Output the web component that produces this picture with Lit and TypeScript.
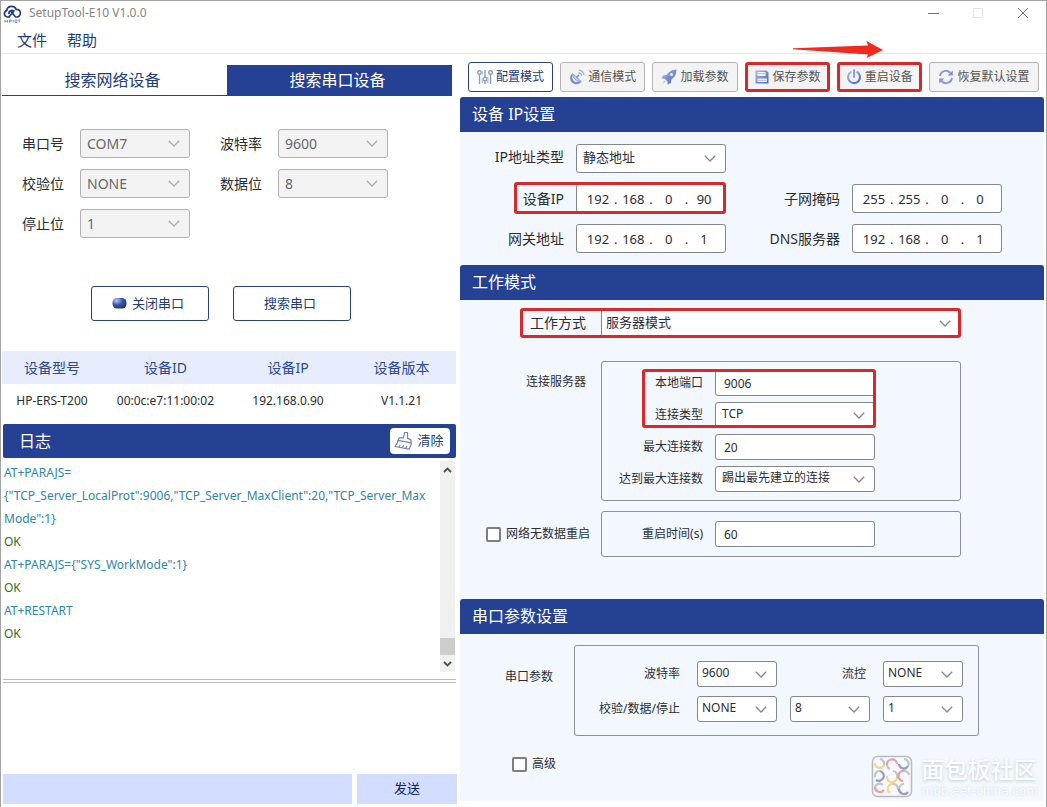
import { LitElement, html, css, svg } from "lit";
import { customElement, state } from "lit/decorators.js";
import { classMap } from "lit/directives/class-map.js";

const chevron = html`<svg class="chev" viewBox="0 0 12 7" aria-hidden="true">
  <path d="M0.8 0.8 L6 6 L11.2 0.8" fill="none" stroke="currentColor" stroke-width="1.3" />
</svg>`;

const toolIcons = {
  config: svg`<g fill="none" stroke="#8c9cc6" stroke-width="1.4">
      <path d="M2.5 5.6V15M8 1V8.4M8 12V15M13.5 5.6V15" />
      <circle cx="2.5" cy="3.6" r="1.8" /><circle cx="8" cy="10.2" r="1.8" /><circle cx="13.5" cy="3.6" r="1.8" />
      <path d="M5.3 2v3.5M10.8 8v6M5.3 9v5" stroke="#b9c6ea" />
    </g>`,
  comm: svg`<path d="M2.600 5A5.600 5.600 0 1 0 12 13.200L9.500 12.500A4.500 4.500 0 0 1 3.500 7z" fill="#7d8fc6" />
    <path d="M3.600 4.600C3 8 7.500 13 12.300 12.600z" fill="#c6d1f2" stroke="#8b9ccd" stroke-width="1" />
    <path d="M7.500 8.500L9.800 6" stroke="#7d8fc6" stroke-width="1.600" />
    <path d="M9.500 3.800a3 3 0 0 1 3 3M10 1.200a5.200 5.200 0 0 1 5 5" fill="none" stroke="#a3b5f0" stroke-width="1.500" />`,
  rocket: svg`<path d="M15.500 .5C10.500 .6 7.500 3 5.500 6L2 6.500.5 9.500l3.200.2 2.800 2.800.3 3 3-1.500.6-3.500C13.500 8.500 15.400 5.500 15.500.5z" fill="url(#blueFade)" />
    <circle cx="10.600" cy="5.400" r="1.500" fill="#e8edfb" /><path d="M3.800 11.400L1 15l3.700-2.500z" fill="#9fb0e4" />`,
  save: svg`<path d="M1.500 1.500h11l2 2v11h-13z" fill="url(#blueFade)" />
    <path d="M3.500 3h8v4h-8zM3.500 9.500h9.500v3.500H3.500z" fill="#f4f6fd" />
    <path d="M3.500 4.600h8M3.500 11.300h9.500" stroke="#a6b6e6" stroke-width=".9" />`,
  power: svg`<path d="M4.600 3.200A6 6 0 1 0 11.400 3.200" fill="none" stroke="url(#blueFade)" stroke-width="2.200" stroke-linecap="round" />
    <path d="M8 1V8" stroke="#8aa0e6" stroke-width="2" stroke-linecap="round" />`,
  reset: svg`<path d="M2 7A6 6 0 0 1 12.500 4M14 9A6 6 0 0 1 3.500 12" fill="none" stroke="#8a9bd0" stroke-width="2" />
    <path d="M14.800 1.500V6.600H9.800zM1.200 14.500V9.400H6.200z" fill="#7f95d8" />`,
};

interface Tool { label: string; icon: keyof typeof toolIcons; kind?: string }

@customElement("app-root")
export class AppRoot extends LitElement {
  @state() tab = 1;
  @state() tools: Tool[] = [
    { label: "配置模式", icon: "config", kind: "active" },
    { label: "通信模式", icon: "comm" },
    { label: "加载参数", icon: "rocket" },
    { label: "保存参数", icon: "save", kind: "marked" },
    { label: "重启设备", icon: "power", kind: "marked" },
    { label: "恢复默认设置", icon: "reset", kind: "wide" },
  ];

  static styles = css`
    :host {
      --navy: #254193;
      --ink: #2b2d33;
      --line: #83868c;
      --red: #d8282c;
      display: flex;
      flex-direction: column;
      min-height: 100vh;
      box-sizing: border-box;
      position: relative;
      border: 1px solid #a3a3a3;
      border-bottom: 0;
      background: #fff;
      color: var(--ink);
      font: 12px/20px "Noto Sans", "Noto Sans CJK SC", sans-serif;
    }
    *, *::before, *::after { box-sizing: border-box; }
    button, input, select, textarea { font: inherit; color: inherit; margin: 0; }
    button { cursor: pointer; padding: 0; }
    .defs { position: absolute; width: 0; height: 0; }

    .title { display: flex; align-items: center; height: 24px; padding: 0 16px 0 2px; color: #858585; font-size: 12px; }
    .title .logo { width: 18px; height: 20px; margin-right: 8px; }
    .title .name { flex: 1; font-weight: normal; }
    .title .win { border: 0; background: none; width: 14px; height: 14px; margin-left: 31px; color: #777; }
    .title .win.off { color: #e2e2e2; }
    .title .win svg { display: block; width: 14px; height: 14px; }
    .menu { display: flex; gap: 20px; padding: 2px 16px 0; height: 29px; border-bottom: 1px solid #e3e8ea; }
    .menu button { border: 0; background: none; font-size: 15px; color: #223c78; height: 26px; }

    main { flex: 1; display: grid; grid-template-columns: minmax(0, 455fr) minmax(0, 584fr); gap: 3px; padding: 0 2px 0 1px; }
    .left { display: flex; flex-direction: column; padding: 11px 0 3px; }
    .tabs { display: grid; grid-template-columns: 1fr 1fr; margin-right: 5px; border-bottom: 1px solid #2b4478; }
    .tabs button { height: 30px; border: 0; background: #fff; color: #223c78; font-size: 16px; padding-right: 4px; }
    .tabs button.on { background: var(--navy); color: #fff; }

    .port { display: grid; grid-template-columns: 42px 110px 42px 110px; column-gap: 16px; row-gap: 11px; align-items: center; padding: 33px 20px 0; font-size: 14px; }
    .port label:nth-of-type(2n) { margin: 0 -14px 0 14px; }
    .port .select:nth-of-type(2n) { margin: 0 -14px 0 14px; }

    .select { display: grid; align-items: center; color: var(--ink); min-width: 0; }
    .select > * { grid-area: 1 / 1; }
    .select select { appearance: none; width: 100%; height: 29px; border: 1px solid var(--line); border-radius: 3px; background: #fff; padding: 0 24px 3px 6px; outline: none; opacity: 1; }
    .select select:disabled { background: #f3f3f3; border-color: #b1b1b1; color: #686868; padding-bottom: 0; }
    .select .chev { justify-self: end; width: 12px; height: 7px; margin-right: 10px; color: #85888e; pointer-events: none; }
    .select select:disabled + .chev { color: #a9abaf; }
    .select.low select { height: 26px; padding-bottom: 2px; }

    .actions { display: flex; gap: 24px; padding: 48px 0 30px 89px; }
    .actions button { width: 118px; height: 35px; border: 1px solid #2b4478; border-radius: 3px; background: #fff; color: #223c78; font-size: 13px; display: flex; align-items: center; justify-content: center; gap: 5px; padding: 0 4px 2px 0; }
    .actions svg { width: 15px; height: 12px; }

    table { border-collapse: collapse; table-layout: fixed; width: calc(100% - 1px); text-align: center; }
    th { height: 33px; padding: 0; background: #e8edfd; color: #2b4a98; font-weight: normal; font-size: 14px; }
    td { height: 33px; padding: 0; }
    .c1 { width: 22%; } .c2 { width: 28%; } .c3 { width: 26%; } .c4 { width: 24%; }

    .loghead { display: flex; align-items: center; justify-content: space-between; margin: 7px 1px 0 1px; height: 34px; padding: 0 6px 0 16px; background: var(--navy); color: #fff; border-radius: 2px; }
    h2 { margin: 0; font-size: 16px; font-weight: normal; }
    .loghead button { display: flex; align-items: center; justify-content: center; gap: 4px; width: 60px; height: 26px; border: 0; border-radius: 4px; background: #fff; color: #223c78; font-size: 13px; padding: 0 2px 2px 0; }
    .loghead svg { width: 19px; height: 19px; }
    .log { display: flex; height: 211px; margin-top: 3px; padding-right: 2px; }
    .lines { flex: 1; min-width: 0; padding-left: 2px; line-height: 23px; color: #2e86a8; font-size: 12px; overflow: hidden; }
    .lines p { margin: 0; white-space: nowrap; }
    .lines .ok { color: #346f28; }
    .bar { width: 15px; background: #f0f0f0; display: flex; flex-direction: column; justify-content: space-between; }
    .bar svg { display: block; width: 15px; height: 17px; color: #505050; }
    .bar .thumb { background: #cdcdcd; height: 17px; margin-top: auto; }
    .split { height: 4px; margin: 7px 1px 0; border: solid #bcbcbc; border-width: 1px 0; }
    textarea { flex: 1; min-height: 60px; border: 0; resize: none; background: #fff; outline: none; }
    .send { display: grid; grid-template-columns: 1fr 100px; gap: 5px; padding-left: 1px; }
    .send input, .send button { height: 30px; border: 0; border-radius: 0; background: #d3ddff; color: #14205a; font-size: 13px; padding-bottom: 2px; }

    .right { position: relative; display: flex; flex-direction: column; padding-bottom: 6px; }
    .tools { display: flex; gap: 7px; padding: 8px 5px 5px 8px; }
    .tools button { display: flex; align-items: center; justify-content: center; gap: 3px; flex: 1 1 85px; height: 30px; border: 1px solid #b3b3b3; border-radius: 3px; background: #f3f3f3; color: #555; white-space: nowrap; }
    .tools button.wide { flex-basis: 110px; }
    .tools button.active { background: #fff; border-color: #2b4478; color: #223c78; }
    .tools button.marked { border: 3px solid var(--red); }
    .tools svg { width: 16px; height: 16px; flex: none; }
    .arrow { position: absolute; left: 333px; top: -14px; width: 90px; height: 20px; }

    section { background: #f3f8fe; }
    section h2 { height: 35px; line-height: 35px; padding-left: 12px; background: var(--navy); color: #fff; border-radius: 3px 3px 0 0; }
    .mark { border: 3px solid var(--red); border-radius: 3px; z-index: 1; pointer-events: none; align-self: stretch; }

    .net { display: grid; grid-template-columns: 104px minmax(0, 150px) 102px minmax(0, 150px); column-gap: 12px; row-gap: 11px; align-items: center; padding: 12px 0; font-size: 14px; }
    .net > label, .net > .lab { text-align: right; }
    .net > label { padding-bottom: 4px; }
    .net .wide { grid-column: 2 / 5; width: 150px; }
    .net select { font-size: 13px; }
    .net .mark { grid-area: 2 / 1 / 3 / 3; margin: -2px 0 -1px 54px; }
    .net .k2 { grid-area: 2 / 1; } .net .v2 { grid-area: 2 / 2; }
    .ip { display: flex; align-items: center; height: 29px; border: 1px solid var(--line); border-radius: 3px; background: #fff; padding: 0 5px; font-size: 13px; }
    .ip input { flex: 1; min-width: 0; width: 0; border: 0; padding: 0; background: none; text-align: center; outline: none; }

    .work { display: grid; grid-template-columns: 126px minmax(0, 360px); column-gap: 15px; row-gap: 10px; padding: 9px 0 42px; }
    .work .mode { grid-area: 1 / 2; margin: 0 0 14px; font-size: 13px; }
    .work .mode select { height: 28px; padding-left: 4px; }
    .work .modeLab { grid-area: 1 / 1; text-align: right; font-size: 14px; line-height: 28px; }
    .work .mark { grid-area: 1 / 1 / 2 / 3; margin: -1px 0 13px 60px; }
    .side { text-align: right; padding-top: 11px; }
    fieldset { margin: 0; border: 1px solid #8a8f99; border-radius: 3px; padding: 8px 0; min-width: 0; }
    .group { display: grid; grid-template-columns: 101px minmax(0, 160px); column-gap: 12px; row-gap: 6px; align-items: center; }
    .group.single { padding: 9px 0; }
    .group > label { text-align: right; white-space: nowrap; }
    .group input { width: 100%; height: 26px; border: 1px solid var(--line); border-radius: 3px; background: #fff; padding: 0 8px; outline: none; }
    .group .mark { grid-area: 1 / 1 / 3 / 3; margin: -1px -1px 0 40px; }
    .group .k1 { grid-area: 1 / 1; } .group .v1 { grid-area: 1 / 2; } .group .k3 { grid-area: 2 / 1; } .group .v3 { grid-area: 2 / 2; }
    .check { display: flex; align-items: center; gap: 5px; }
    .check input { appearance: none; flex: none; width: 15px; height: 15px; border: 2px solid #7c7f86; border-radius: 2px; background: #fff; }
    .check input:checked { background: var(--navy); }
    .work .check { padding-left: 26px; white-space: nowrap; }

    .serial { flex: 1; }
    .serial .row { display: grid; grid-template-columns: 93px minmax(0, 405px); column-gap: 21px; padding-top: 11px; }
    .serial .side { padding-top: 22px; }
    .serial .group { grid-template-columns: 109px repeat(3, minmax(0, 80px)); column-gap: 13px; row-gap: 9px; padding: 15px 0 13px; }
    .serial .group > label { padding-right: 4px; }
    .serial .check { padding: 18px 0 0 52px; width: max-content; }
    .serial .select select { padding: 0 20px 2px 4px; }

    .mark-site { position: absolute; right: 8px; bottom: 8px; display: flex; gap: 8px; align-items: center; color: #fff; opacity: .8; }
    .mark-site svg { width: 43px; height: 44px; }
    .mark-site b { display: block; font-size: 23px; line-height: 30px; font-weight: 500; text-shadow: 0 1px 3px #b4bccb; }
    .mark-site span { display: block; font: 12px/15px "DejaVu Sans", sans-serif; text-shadow: 0 0 2px #bcc4d2; }
  `;

  private pick(id: string, options: string[], cls = "", disabled = false, label = "") {
    return html`<span class="select ${cls}">
      <select id=${id} ?disabled=${disabled} aria-label=${label || id}>${options.map((o) => html`<option>${o}</option>`)}</select>
      ${chevron}
    </span>`;
  }

  private ip(label: string, value: string, cls = "") {
    const parts = value.split(".");
    return html`<div class="ip ${cls}" role="group" aria-label=${label}>
      ${parts.map((p, i) => html`${i ? html`<span>.</span>` : ""}<input .value=${p} maxlength="3" aria-label="${label} ${i + 1}" />`)}
    </div>`;
  }

  render() {
    return html`
      <svg class="defs" aria-hidden="true">
        <defs>
          <linearGradient id="blueFade" x1="0" y1="0" x2="1" y2="1"><stop offset="0" stop-color="#a8baf2" /><stop offset="1" stop-color="#4c66b4" /></linearGradient>
          <radialGradient id="led" cx=".3" cy=".25" r=".9"><stop offset="0" stop-color="#b9c8ee" /><stop offset=".45" stop-color="#3d57ab" /><stop offset="1" stop-color="#182c72" /></radialGradient>
        </defs>
      </svg>
      <header>
        <div class="title">
          <svg class="logo" viewBox="0 0 18 20" aria-hidden="true">
            <g fill="none" stroke="#223a8c" stroke-width="1.700" stroke-linecap="round">
              <path d="M6 14H4.300A3.300 3.300 0 0 1 3.700 7.600A5 5 0 0 1 13.200 6.300A3.800 3.800 0 0 1 13.800 14H12.600L8 8.500" />
              <path d="M6.200 13.500L11 8M6 10.500A2.500 2.500 0 0 1 10.500 8.600" />
            </g>
            <path d="M2 17v2.500M4.500 17v2.500M2 18.200h2.500M6.500 19.500V17h1.800v1.300H6.500M10.300 17v2.500M12 17h2v2.500h-2zM15 17h2.500M16.200 17v2.500" stroke="#5b6ba5" stroke-width=".7" fill="none" />
          </svg>
          <span class="name">SetupTool-E10 V1.0.0</span>
          <button class="win" aria-label="最小化"><svg viewBox="0 0 14 14"><path d="M2 7.500h11" stroke="currentColor" /></svg></button>
          <button class="win off" aria-label="最大化"><svg viewBox="0 0 14 14"><path d="M2.500 2.500h9v9h-9z" fill="none" stroke="currentColor" /></svg></button>
          <button class="win" aria-label="关闭"><svg viewBox="0 0 14 14"><path d="M2 2l10 10M12 2L2 12" stroke="currentColor" /></svg></button>
        </div>
        <nav class="menu"><button>文件</button><button>帮助</button></nav>
      </header>
      <main>
        <div class="left">
          <div class="tabs" role="tablist">
            ${["搜索网络设备", "搜索串口设备"].map((t, i) => html`<button role="tab" aria-selected=${this.tab === i} class=${classMap({ on: this.tab === i })} @click=${() => (this.tab = i)}>${t}</button>`)}
          </div>
          <div class="port">
            <label for="com">串口号</label>${this.pick("com", ["COM7"], "", true, "串口号")}
            <label for="baud">波特率</label>${this.pick("baud", ["9600"], "", true, "波特率")}
            <label for="parity">校验位</label>${this.pick("parity", ["NONE"], "", true, "校验位")}
            <label for="bits">数据位</label>${this.pick("bits", ["8"], "", true, "数据位")}
            <label for="stop">停止位</label>${this.pick("stop", ["1"], "", true, "停止位")}
          </div>
          <div class="actions">
            <button>
              <svg viewBox="0 0 15 12" aria-hidden="true"><rect x=".5" y="1" width="14" height="10.500" rx="4.500" fill="url(#led)" /></svg>关闭串口</button>
            <button>搜索串口</button>
          </div>
          <table>
            <thead><tr><th class="c1">设备型号</th><th class="c2">设备ID</th><th class="c3">设备IP</th><th class="c4">设备版本</th></tr></thead>
            <tbody><tr><td>HP-ERS-T200</td><td>00:0c:e7:11:00:02</td><td>192.168.0.90</td><td>V1.1.21</td></tr></tbody>
          </table>
          <div class="loghead">
            <h2>日志</h2>
            <button>
              <svg viewBox="0 0 19 19" aria-hidden="true">
                <g fill="none" stroke="#7384b4" stroke-width="1.200" stroke-linejoin="round">
                  <path d="M9.600 6.800L10.500 1.500h3L13.600 7.400 16.600 8.600l.7 3.200L4 9.400l1.200-2.600z" /><path d="M4 9.400C3.800 12.500 2.800 14 1 15.500L15 18.200c1.500-2 2.200-4 2.300-6.400M5 16l1.300-2.200M8.500 16.800L9.600 14M12 17.400l.8-2.600" />
                </g>
              </svg>清除</button>
          </div>
          <div class="log">
            <div class="lines">
              <p>AT+PARAJS=</p>
              <p>{"TCP_Server_LocalProt":9006,"TCP_Server_MaxClient":20,"TCP_Server_Max</p>
              <p>Mode":1}</p>
              <p class="ok">OK</p>
              <p>AT+PARAJS={"SYS_WorkMode":1}</p>
              <p class="ok">OK</p>
              <p>AT+RESTART</p>
              <p class="ok">OK</p>
            </div>
            <div class="bar" aria-hidden="true">
              <svg viewBox="0 0 15 17"><path d="M4 11L7.500 7.500 11 11" fill="none" stroke="currentColor" stroke-width="1.800" /></svg>
              <div class="thumb"></div>
              <svg viewBox="0 0 15 17"><path d="M4 7L7.500 10.500 11 7" fill="none" stroke="currentColor" stroke-width="1.800" /></svg>
            </div>
          </div>
          <div class="split"></div>
          <textarea aria-label="发送内容"></textarea>
          <div class="send"><input aria-label="发送" /><button>发送</button></div>
        </div>

        <div class="right">
          <div class="tools">
            ${this.tools.map((t) => html`<button class=${t.kind ?? ""}><svg viewBox="0 0 16 16" aria-hidden="true">${toolIcons[t.icon]}</svg>${t.label}</button>`)}
          </div>
          <svg class="arrow" viewBox="0 0 90 20" aria-hidden="true"><path d="M0 8.300L75 5.500 73.500 1 90 10 73.500 18 75 14.500 0 9.300z" fill="#f02a1c" /></svg>

          <section>
            <h2>设备 IP设置</h2>
            <div class="net">
              <label for="iptype">IP地址类型</label>${this.pick("iptype", ["静态地址"], "wide", false, "IP地址类型")}
              <span class="lab k2">设备IP</span>${this.ip("设备IP", "192.168.0.90", "v2")}
              <span class="lab">子网掩码</span>${this.ip("子网掩码", "255.255.0.0")}
              <span class="mark"></span>
              <span class="lab">网关地址</span>${this.ip("网关地址", "192.168.0.1")}
              <span class="lab">DNS服务器</span>${this.ip("DNS服务器", "192.168.0.1")}
            </div>
          </section>

          <section>
            <h2>工作模式</h2>
            <div class="work">
              <label class="modeLab" for="mode">工作方式</label>${this.pick("mode", ["服务器模式"], "mode", false, "工作方式")}
              <span class="mark"></span>
              <span class="side">连接服务器</span>
              <fieldset class="group" aria-label="连接服务器">
                <label class="k1" for="lport">本地端口</label><input class="v1" id="lport" value="9006" />
                <label class="k3" for="ctype">连接类型</label>${this.pick("ctype", ["TCP"], "low v3", false, "连接类型")}
                <span class="mark"></span>
                <label for="max">最大连接数</label><input id="max" value="20" />
                <label for="over">达到最大连接数</label>${this.pick("over", ["踢出最先建立的连接"], "low", false, "达到最大连接数")}
              </fieldset>
              <label class="check"><input type="checkbox" />网络无数据重启</label>
              <fieldset class="group single" aria-label="网络无数据重启">
                <label for="rt">重启时间(s)</label><input id="rt" value="60" />
              </fieldset>
            </div>
          </section>

          <section class="serial">
            <h2>串口参数设置</h2>
            <div class="row">
              <span class="side">串口参数</span>
              <fieldset class="group" aria-label="串口参数">
                <label for="sbaud">波特率</label>${this.pick("sbaud", ["9600"], "low", false, "波特率")}
                <label for="flow">流控</label>${this.pick("flow", ["NONE"], "low", false, "流控")}
                <label for="spar">校验/数据/停止</label>${this.pick("spar", ["NONE"], "low", false, "校验")}
                ${this.pick("sbits", ["8"], "low", false, "数据")}${this.pick("sstop", ["1"], "low", false, "停止")}
              </fieldset>
            </div>
            <label class="check"><input type="checkbox" />高级</label>
          </section>
        </div>
      </main>
      <div class="mark-site">
        <svg viewBox="0 0 43 44" aria-hidden="true">
          <rect x="1.500" y="1.500" width="39" height="40" rx="5" fill="#f8fafd" stroke="#a9acb6" stroke-width="1.500" />
          <g fill="none" stroke-width="2.200">
            <path d="M4 8a4.700 4.700 0 0 0 9 2" stroke="#f3cf72" /><path d="M9 4a4.700 4.700 0 0 1 4 6" stroke="#b3b6be" />
            <path d="M16 10a5 5 0 0 1 10 -1" stroke="#ee868c" /><path d="M16 10a5 5 0 0 0 3 4" stroke="#b3b6be" />
            <path d="M28 9a4.800 4.800 0 0 0 9 2" stroke="#8385b8" /><path d="M33 4a4.800 4.800 0 0 1 4 7" stroke="#b3b6be" />
            <path d="M9 16a5 5 0 1 1 -4 9" stroke="#8385b8" /><path d="M4 22a5 5 0 0 1 5 -6" stroke="#b3b6be" />
            <path d="M16 21a5 5 0 0 0 10 2" stroke="#f3cf72" /><path d="M22 16a5 5 0 0 1 4 7" stroke="#b3b6be" />
            <path d="M33 16a5 5 0 0 0 -1 10" stroke="#ee868c" /><path d="M33 16a5 5 0 0 1 5 4" stroke="#b3b6be" />
            <path d="M4 32a5 5 0 0 0 9 3" stroke="#ee868c" /><path d="M4 32a5 5 0 0 1 8 -2" stroke="#b3b6be" />
            <path d="M19 38a5 5 0 0 1 4 -9" stroke="#f3cf72" /><path d="M22 29a5 5 0 0 1 5 6" stroke="#b3b6be" />
            <path d="M28 34a5 5 0 0 0 9 3" stroke="#8385b8" /><path d="M28 34a5 5 0 0 1 5 -5" stroke="#b3b6be" />
          </g>
        </svg>
        <div><b>面包板社区</b><span>mbb.eet-china.com</span></div>
      </div>
    `;
  }
}
